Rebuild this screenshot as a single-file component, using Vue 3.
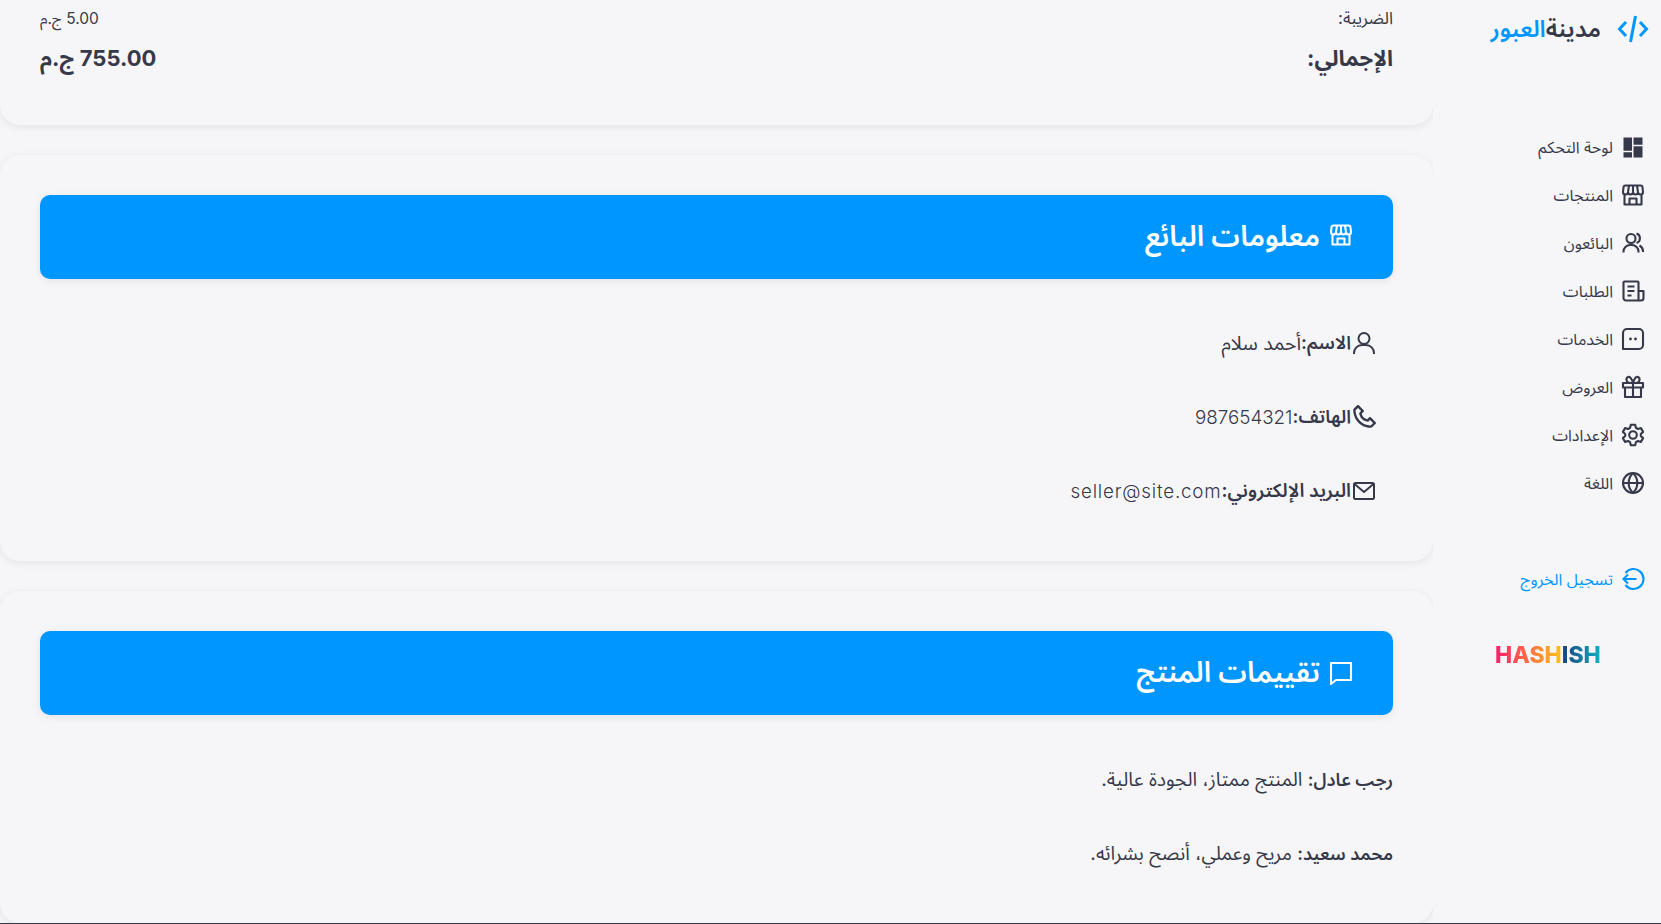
<script setup>
const navItems = [
  { label: "لوحة التحكم", icon: "dash" },
  { label: "المنتجات", icon: "store" },
  { label: "البائعون", icon: "group" },
  { label: "الطلبات", icon: "news" },
  { label: "الخدمات", icon: "dots" },
  { label: "العروض", icon: "gift" },
  { label: "الإعدادات", icon: "cog" },
  { label: "اللغة", icon: "globe" },
];

const reviews = [
  { name: "رجب عادل:", text: "المنتج ممتاز، الجودة عالية." },
  { name: "محمد سعيد:", text: "مريح وعملي، أنصح بشرائه." },
];
</script>

<template>
  <div class="page" dir="rtl">
    <aside class="sidebar">
      <div class="logo">
        <svg class="logo-icon" viewBox="0 0 32 32" fill="none" stroke="currentColor" stroke-width="3">
          <path d="M9 9 2.500 16 9 23M23 9l6.500 7L23 23M18.500 3 13.500 29" />
        </svg>
        <span class="logo-text">مدينة<span class="accent">العبور</span></span>
      </div>

      <nav class="nav">
        <a v-for="item in navItems" :key="item.label" class="nav-item">
          <svg class="icon" viewBox="0 0 24 24" fill="none" stroke="currentColor" stroke-width="2.100" stroke-linejoin="round">
            <template v-if="item.icon === 'dash'">
              <path fill="currentColor" stroke="none" d="M2.500 2.500h8.500v13.300H2.500zM2.500 17.200h8.500v5.300H2.500zM12.500 2.500h9v7.300h-9zM12.500 11.300h9v11.200h-9z" />
            </template>
            <template v-else-if="item.icon === 'store'">
              <path d="M4.500 2.500h15a2 2 0 0 1 2 2L22 9a2.500 2.500 0 0 1-5 0 2.500 2.500 0 0 1-5 0 2.500 2.500 0 0 1-5 0 2.500 2.500 0 0 1-5 0l.500-4.500a2 2 0 0 1 2-2ZM7 9l1-6.500M12 9V2.500M17 9l-1-6.500M3.500 12v9.500h17V12M8.500 21.500v-6h7v6" />
            </template>
            <template v-else-if="item.icon === 'group'">
              <circle cx="10" cy="7.500" r="4.500" />
              <path d="M2.500 21.500v-1a6.500 6.500 0 0 1 6.500-6.500h2a6.500 6.500 0 0 1 6.500 6.500v1M15.500 2.500a5 5 0 0 1 0 9.500M18.500 14.500a6.500 6.500 0 0 1 3.500 5.500v1" />
            </template>
            <template v-else-if="item.icon === 'news'">
              <path d="M17.500 21.500V3.500a1 1 0 0 0-1-1H3.500a1 1 0 0 0-1 1V19a2.500 2.500 0 0 0 2.500 2.500h15a2.500 2.500 0 0 0 2.500-2.500v-7h-5M6.500 7.500h7M6.500 12h7M6.500 16.500h4" />
            </template>
            <template v-else-if="item.icon === 'dots'">
              <path d="M6 2h12a4 4 0 0 1 4 4v12a4 4 0 0 1-4 4H2V6a4 4 0 0 1 4-4Z" />
              <circle cx="9.500" cy="12" r="1.400" fill="currentColor" stroke="none" />
              <circle cx="14.500" cy="12" r="1.400" fill="currentColor" stroke="none" />
            </template>
            <template v-else-if="item.icon === 'gift'">
              <path d="M2 8h20v4.500H2zM4 12.500V22h16v-9.500M12 8v14M12 8C10.500 2.500 8.500 1.500 7 2 4.500 3 5 8 9 8M12 8c1.500-5.500 3.500-6.500 5-6 2.500 1 2 6-2 6" />
            </template>
            <template v-else-if="item.icon === 'cog'">
              <circle cx="12" cy="12" r="3.800" />
              <path d="M9.800 1.800h4.400l.7 3 2 1.200 3-.9 2.200 3.800-2.300 2.100v2l2.300 2.100-2.200 3.800-3-.9-2 1.200-.7 3H9.800l-.7-3-2-1.200-3 .9-2.200-3.800 2.300-2.100v-2L1.900 8.900l2.200-3.800 3 .9 2-1.200Z" />
            </template>
            <template v-else>
              <circle cx="12" cy="12" r="10" />
              <path d="M2 12h20M12 2c-5.800 5.800-5.800 14.200 0 20M12 2c5.800 5.800 5.800 14.200 0 20" />
            </template>
          </svg>
          <span>{{ item.label }}</span>
        </a>
      </nav>

      <a class="nav-item logout">
        <svg class="icon" viewBox="0 0 24 24" fill="none" stroke="currentColor" stroke-width="2.100">
          <path d="M2.500 12h13M7 7.500 2.500 12 7 16.500M4.500 6a10 10 0 1 1 0 12" />
        </svg>
        <span>تسجيل الخروج</span>
      </a>

      <div class="brand" dir="ltr">HASHISH</div>
    </aside>

    <main class="content">
      <section class="card totals">
        <div class="row small">
          <span class="tax-label">الضريبة:</span>
          <span>5.00 ج.م</span>
        </div>
        <div class="row total">
          <span>الإجمالي:</span>
          <span>755.00 ج.م</span>
        </div>
      </section>

      <section class="card">
        <h2 class="card-head">
          <svg class="head-icon store-icon" viewBox="0 0 24 24" fill="none" stroke="currentColor" stroke-width="2.100" stroke-linejoin="round">
            <path d="M4.500 2.500h15a2 2 0 0 1 2 2L22 9a2.500 2.500 0 0 1-5 0 2.500 2.500 0 0 1-5 0 2.500 2.500 0 0 1-5 0 2.500 2.500 0 0 1-5 0l.500-4.500a2 2 0 0 1 2-2ZM7 9l1-6.500M12 9V2.500M17 9l-1-6.500M3.500 12v9.500h17V12M8.500 21.500v-6h7v6" />
          </svg>
          معلومات البائع
        </h2>
        <ul class="info">
          <li>
            <svg class="info-icon" viewBox="0 0 24 24" fill="none" stroke="currentColor" stroke-width="2">
              <circle cx="12" cy="7.500" r="5.500" />
              <path d="M2 23v-1a8 8 0 0 1 8-8h4a8 8 0 0 1 8 8v1" />
            </svg>
            <strong>الاسم:</strong>
            <span class="ar">أحمد سلام</span>
          </li>
          <li>
            <svg class="info-icon" viewBox="2 2 20 20" fill="currentColor">
              <path d="M17.707 12.293a.999.999 0 0 0-1.414 0l-1.594 1.594c-.739-.22-2.118-.72-2.992-1.594s-1.374-2.253-1.594-2.992l1.594-1.594a.999.999 0 0 0 0-1.414l-4-4a.999.999 0 0 0-1.414 0L3.581 5.005c-.38.38-.594.902-.586 1.435.023 1.424.4 6.370 4.298 10.268s8.844 4.274 10.269 4.298h.028c.528 0 1.027-.208 1.405-.586l2.712-2.712a.999.999 0 0 0 0-1.414l-4-4.001zm-.127 6.712c-1.248-.021-5.518-.356-8.873-3.712-3.366-3.366-3.692-7.651-3.712-8.874L7 4.414 9.586 7 8.293 8.293a1 1 0 0 0-.272.912c.024.115.611 2.842 2.271 4.502s4.387 2.247 4.502 2.271a.991.991 0 0 0 .912-.271L17 14.414 19.586 17l-2.006 2.005z" />
            </svg>
            <strong>الهاتف:</strong>
            <span class="phone">987654321</span>
          </li>
          <li>
            <svg class="info-icon" viewBox="0 0 24 24" fill="none" stroke="currentColor" stroke-width="2">
              <rect x="2" y="4" width="20" height="16" rx="1.500" />
              <path d="m2.500 5 9.500 8 9.500-8" />
            </svg>
            <strong class="wide">البريد الإلكتروني:</strong>
            <span class="email">seller@site.com</span>
          </li>
        </ul>
      </section>

      <section class="card">
        <h2 class="card-head">
          <svg class="head-icon" viewBox="0 0 24 24" fill="none" stroke="currentColor" stroke-width="2.100">
            <path d="M2 2h20v17H7l-5 4Z" stroke-linejoin="round" />
          </svg>
          تقييمات المنتج
        </h2>
        <p v-for="r in reviews" :key="r.name" class="review">
          <strong>{{ r.name }}</strong> {{ r.text }}
        </p>
      </section>
    </main>
  </div>
</template>

<style>
html,
body {
  margin: 0;
  background: #f6f6f9;
}
</style>

<style scoped>
.page {
  display: flex;
  height: 923px;
  overflow: hidden;
  background: #f6f6f9;
  border-bottom: 1px solid #363949;
  color: #363949;
  font-family: Inter, "Noto Sans", "Noto Sans Arabic", sans-serif;
  font-size: 16px;
}

.sidebar {
  width: 228px;
  flex-shrink: 0;
  display: flex;
  flex-direction: column;
}
.logo {
  display: flex;
  align-items: center;
  gap: 16px;
  padding: 12px 12px 0 0;
  height: 34px;
}
.logo-icon {
  width: 32px;
  height: 32px;
  color: #0096ff;
}
.logo-text {
  font-size: 23.500px;
  font-weight: 600;
}
.accent {
  color: #0096ff;
}
.nav {
  display: flex;
  flex-direction: column;
  margin-top: 78px;
}
.nav-item {
  display: flex;
  align-items: center;
  gap: 8px;
  height: 48px;
  padding-right: 16px;
  font-size: 16px;
}
.icon {
  width: 24px;
  height: 24px;
  margin-bottom: 2px;
}
.logout {
  margin-top: 48px;
  color: #0096ff;
}
.brand {
  align-self: flex-end;
  margin: 37px 0 0 62px;
  font-size: 23px;
  font-weight: 800;
  background: linear-gradient(90deg, #ff1a6b, #ffc01a 62%, #1a3f78 63%, #12b0c8);
  -webkit-background-clip: text;
  background-clip: text;
  color: transparent;
}

.content {
  flex: 1;
  min-width: 0;
  display: flex;
  flex-direction: column;
  gap: 30px;
  overflow: hidden;
}
.card {
  background: #f6f6f9;
  border-radius: 20px;
  padding: 40px 40px 33px;
  box-shadow: 0 2px 8px rgba(0, 0, 0, 0.08);
}
.totals {
  border-radius: 0 0 20px 20px;
  padding: 3px 40px 43px;
}
.row {
  display: flex;
  justify-content: space-between;
}
.small {
  font-size: 15.500px;
  height: 22px;
}
.tax-label {
  font-size: 17px;
  margin-top: -2px;
}
.total {
  margin-top: 11px;
  font-size: 22px;
  font-weight: 700;
}
.card-head {
  display: flex;
  align-items: center;
  gap: 9px;
  height: 84px;
  margin: 0 0 27px;
  padding: 0 40px;
  background: #0096ff;
  color: #fff;
  border-radius: 10px;
  font-size: 28.500px;
  font-weight: 600;
  box-shadow: 0 2px 8px rgba(0, 0, 0, 0.08);
}
.head-icon {
  width: 24px;
  height: 24px;
}
.store-icon {
  margin-bottom: 4px;
}
.info {
  list-style: none;
  margin: 0;
  padding: 0 17px 0 0;
}
.info li {
  display: flex;
  align-items: center;
  height: 74px;
  font-size: 18px;
}
.info strong {
  font-size: 18.500px;
  font-weight: 600;
}
.info strong.wide {
  font-size: 19px;
}
.info-icon {
  width: 24px;
  height: 24px;
  margin-left: 1px;
}
.ar {
  font-size: 19.500px;
}
.phone,
.email {
  font-size: 18.800px;
  font-weight: 300;
}
.email {
  letter-spacing: 0.800px;
}
.review {
  margin: 0;
  height: 74px;
  line-height: 74px;
  font-size: 19.300px;
}
.review strong {
  font-size: 18px;
  font-weight: 600;
}
</style>
